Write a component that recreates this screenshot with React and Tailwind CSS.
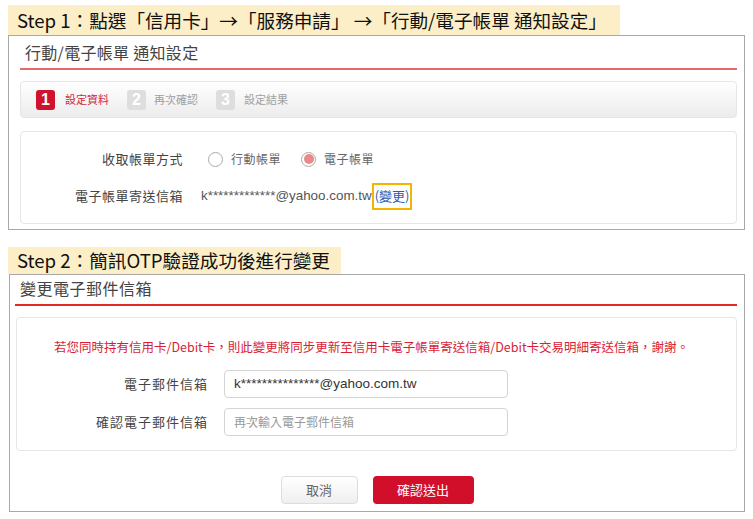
export default function App() {
  const cjk = { fontFamily: '"Noto Sans CJK TC", "Noto Sans", sans-serif' };
  const latin = { fontFamily: '"Liberation Sans", "Noto Sans CJK TC", sans-serif' };
  return (
    <div className="w-[753px] h-[519px] bg-white relative overflow-hidden text-[#333]" style={cjk}>
      {/* Step 1 banner */}
      <div className="pt-[5px] pl-[8px]">
        <div className="w-[612px] h-[30px] bg-[#fcefc8] flex items-center pl-[9px] text-[18.6px] leading-none text-[#111] whitespace-nowrap">
          Step 1：點選「信用卡」→「服務申請」 →「行動/電子帳單 通知設定」
        </div>
      </div>
      {/* Panel 1 */}
      <div className="ml-[8px] w-[737px] h-[195px] border border-[#a8a8a8] flex flex-col">
        <div className="h-[32px] flex items-end pl-[16px] text-[16px] leading-none text-[#444] pb-[8px] tracking-[0.3px]">行動/電子帳單 通知設定</div>
        <div className="ml-[11px] mr-[7px] h-[2px] bg-[#e66a6a]" />
        <div className="ml-[11px] mr-[7px] mt-[11px] h-[37px] rounded-[4px] border border-[#e6e6e6] bg-gradient-to-b from-white to-[#ececec] flex items-center pl-[15px] text-[11px]">
          <div className="flex items-center">
            <span className="w-[19px] h-[20px] rounded-[3px] bg-[#d2112e] text-white text-[16px] font-bold flex items-center justify-center" style={latin}>1</span>
            <span className="ml-[10px] text-[#d0283e]">設定資料</span>
          </div>
          <div className="flex items-center ml-[18px]">
            <span className="w-[19px] h-[20px] rounded-[3px] bg-[#dedede] text-white text-[16px] font-bold flex items-center justify-center" style={latin}>2</span>
            <span className="ml-[8px] text-[#a0a0a0]">再次確認</span>
          </div>
          <div className="flex items-center ml-[18px]">
            <span className="w-[19px] h-[20px] rounded-[3px] bg-[#dedede] text-white text-[16px] font-bold flex items-center justify-center" style={latin}>3</span>
            <span className="ml-[9px] text-[#a0a0a0]">設定結果</span>
          </div>
        </div>
        <div className="ml-[11px] mr-[7px] mt-[13px] h-[93px] rounded-[4px] border border-[#e6e6e6] flex flex-col pt-[14px]">
          <div className="flex items-center h-[26px]">
            <div className="w-[162px] text-right text-[13px] tracking-[0.5px] text-[#444]">收取帳單方式</div>
            <div className="ml-[25px] flex items-center text-[12px] tracking-[0.5px] text-[#666]">
              <span className="w-[15px] h-[15px] rounded-full border border-[#aaa] bg-white" />
              <span className="ml-[8px]">行動帳單</span>
              <span className="ml-[20px] w-[15px] h-[15px] rounded-full border border-[#aaa] bg-white flex items-center justify-center">
                <span className="w-[10px] h-[10px] rounded-full bg-[#e88a8a]" />
              </span>
              <span className="ml-[8px]">電子帳單</span>
            </div>
          </div>
          <div className="flex items-center h-[28px] mt-[10px]">
            <div className="w-[162px] text-right text-[13px] tracking-[0.5px] text-[#444]">電子帳單寄送信箱</div>
            <div className="ml-[18px] flex items-center text-[13.4px] text-[#555]" style={latin}>
              <span>k*************@yahoo.com.tw</span>
              <span className="h-[27px] border-2 border-[#f5b400] flex items-center px-[1px] text-[13px] text-[#2a5db0]" style={cjk}>(變更)</span>
            </div>
          </div>
        </div>
      </div>
      {/* Step 2 banner */}
      <div className="pl-[8px] mt-[17px]">
        <div className="w-[333px] h-[27px] bg-[#fcefc8] flex items-center pl-[9px] text-[18.6px] leading-none text-[#111] whitespace-nowrap">
          Step 2：簡訊OTP驗證成功後進行變更
        </div>
      </div>
      {/* Panel 2 */}
      <div className="ml-[9px] w-[736px] h-[238px] border border-[#a8a8a8] flex flex-col">
        <div className="h-[29px] flex items-center pl-[10px] pb-[4px] text-[16px] leading-none text-[#444] tracking-[0.5px]">變更電子郵件信箱</div>
        <div className="ml-[5px] mr-[7px] h-[2px] bg-[#e02a2a]" />
        <div className="ml-[6px] mr-[7px] mt-[11px] h-[134px] rounded-[4px] border border-[#e6e6e6] flex flex-col">
          <div className="mt-[20px] pl-[37px] text-[12.5px] text-[#d81e36] whitespace-nowrap">
            若您同時持有信用卡/Debit卡，則此變更將同步更新至信用卡電子帳單寄送信箱/Debit卡交易明細寄送信箱，謝謝。
          </div>
          <div className="flex items-center mt-[13px]">
            <div className="w-[191px] text-right text-[13px] tracking-[1px] text-[#444]">電子郵件信箱</div>
            <div className="ml-[16px] w-[284px] h-[28px] rounded-[4px] border border-[#d4d4d4] flex items-center pl-[9px] text-[13.5px] text-[#333]" style={latin}>
              k***************@yahoo.com.tw
            </div>
          </div>
          <div className="flex items-center mt-[10px]">
            <div className="w-[191px] text-right text-[13px] tracking-[1px] text-[#444]">確認電子郵件信箱</div>
            <div className="ml-[16px] w-[284px] h-[28px] rounded-[4px] border border-[#d4d4d4] flex items-center pl-[9px] text-[12px] text-[#999]">
              再次輸入電子郵件信箱
            </div>
          </div>
        </div>
        <div className="flex justify-center gap-[15px] mt-[25px]">
          <div className="w-[77px] h-[28px] rounded-[4px] border border-[#ddd] bg-gradient-to-b from-white to-[#efefef] flex items-center justify-center text-[13px] text-[#666]">取消</div>
          <div className="w-[101px] h-[28px] rounded-[4px] bg-[#d20f2b] flex items-center justify-center text-[13px] text-white">確認送出</div>
        </div>
      </div>
    </div>
  );
}
